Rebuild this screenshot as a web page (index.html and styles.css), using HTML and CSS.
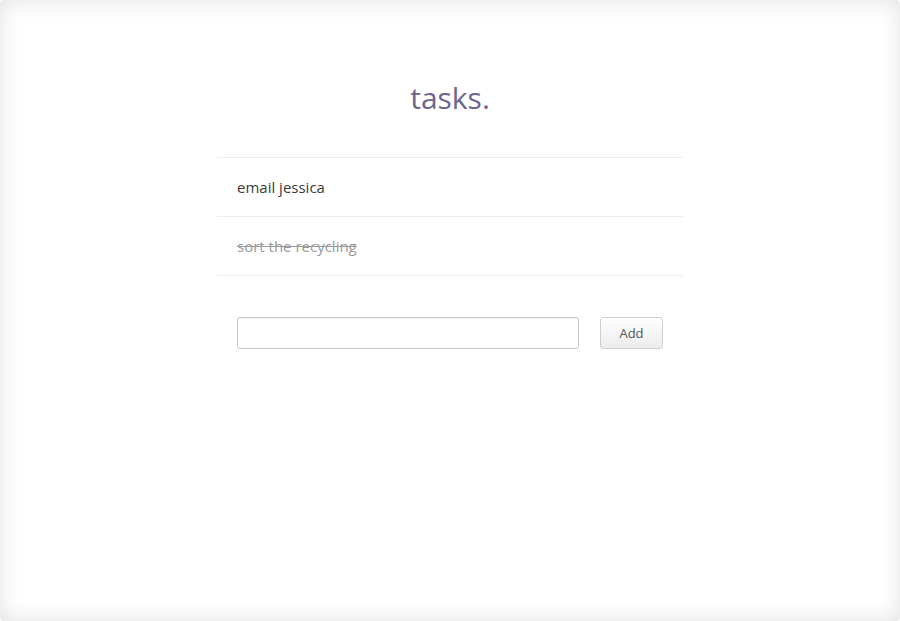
FILE: index.html
```html
<!DOCTYPE html>
<html>
<head>
<meta charset="utf-8">
<link rel="stylesheet" href="styles.css">
</head>
<body>
<div class="frame">
  <main class="app">
    <h1 class="title">tasks.</h1>
    <ul class="list">
      <li class="item">email jessica</li>
      <li class="item done">sort the recycling</li>
    </ul>
    <form class="add-form">
      <input class="field" type="text">
      <button class="btn" type="button">Add</button>
    </form>
  </main>
</div>
</body>
</html>
```
FILE: styles.css
```css
html, body {
  margin: 0;
  padding: 0;
  height: 100%;
}
body {
  font-family: "Open Sans", "Noto Sans", sans-serif;
  background: #fff;
}
.frame {
  height: 621px;
  box-sizing: border-box;
  box-shadow: inset 0 0 22px rgba(0,0,0,0.12);
  border-radius: 4px;
  overflow: hidden;
}
.app {
  width: 466px;
  margin: 0 auto;
  padding-top: 76px;
}
.title {
  margin: 0;
  text-align: center;
  font-weight: 400;
  font-size: 30px;
  line-height: 44px;
  color: #6b6590;
  height: 81px;
}
.list {
  list-style: none;
  margin: 0;
  padding: 0;
  border-bottom: 1px solid #eeeeee;
}
.item {
  border-top: 1px solid #eeeeee;
  height: 58px;
  line-height: 58px;
  padding: 0 20px;
  font-size: 15px;
  color: #3a3a3a;
}
.item.done {
  color: #999;
  text-decoration: line-through;
}
.add-form {
  display: flex;
  gap: 21px;
  padding: 41px 20px 0;
}
.field {
  width: 342px;
  flex: none;
  height: 32px;
  box-sizing: border-box;
  border: 1px solid #c6c6c6;
  border-radius: 3px;
  margin: 0;
  padding: 0 8px;
  font: inherit;
  background: #fff;
  box-shadow: inset 0 1px 1px rgba(0,0,0,0.04);
}
.btn {
  width: 63px;
  flex: none;
  height: 32px;
  box-sizing: border-box;
  border: 1px solid #d0d0d0;
  border-radius: 3px;
  background: linear-gradient(#ffffff, #ececec);
  font-family: "Open Sans", "Noto Sans", sans-serif;
  font-size: 13px;
  color: #555;
  margin: 0;
  padding: 0;
}
```
